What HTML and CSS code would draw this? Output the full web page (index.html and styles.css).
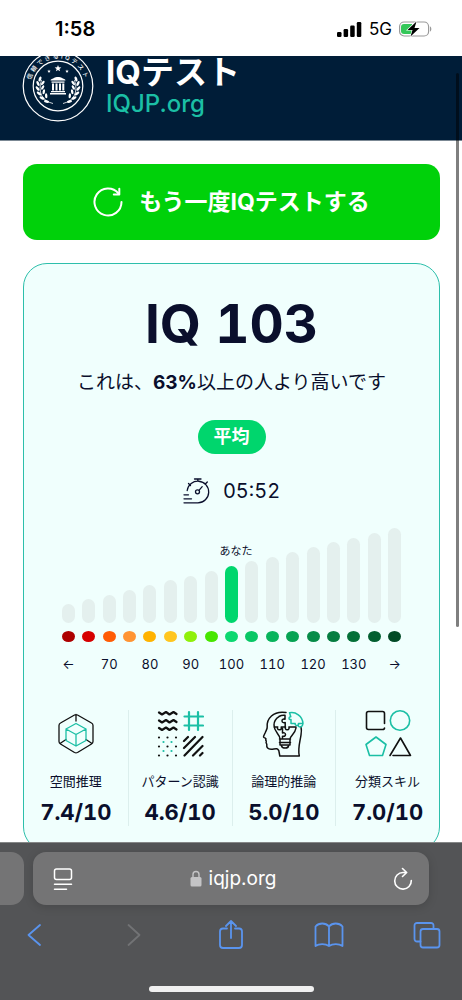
FILE: index.html
```html
<!DOCTYPE html>
<html lang="ja">
<head>
<meta charset="utf-8">
<meta name="viewport" content="width=device-width, initial-scale=1">
<title>IQテスト</title>
<link rel="stylesheet" href="styles.css">
</head>
<body>
<div class="screen">
  <div class="status">
    <span class="clock">1:58</span>
    <div class="status-right">
      <svg width="25" height="15" viewBox="0 0 25 15"><rect x="0" y="10" width="4.5" height="5" rx="1.2"/><rect x="6.6" y="7" width="4.5" height="8" rx="1.2"/><rect x="13.2" y="3.6" width="4.5" height="11.400" rx="1.200"/><rect x="19.800" y="0" width="4.500" height="15" rx="1.200"/></svg>
      <span class="network">5G</span>
      <svg width="33" height="18" viewBox="0 0 33 18"><rect x="0.600" y="2" width="29" height="14" rx="4.500" fill="none" stroke="#9a9a9a" stroke-width="1.200"/><path d="M31 6.500c1.800.6 1.800 4.400 0 5z" fill="#9a9a9a"/><path d="M5 4h8v10H5a3 3 0 0 1-3-3V7a3 3 0 0 1 3-3z" fill="#34c759"/><path d="M17.500 1.500 8.500 10h5l-2 6.500L20.500 8h-5z" fill="#000" stroke="#fff" stroke-width="1.200" paint-order="stroke"/></svg>
    </div>
  </div>

  <div class="viewport">
    <header class="site-header">
      <svg class="emblem" width="72" height="72" viewBox="0 0 72 72">
        <defs>
          <path id="ring" d="M8.500 36a27.500 27.500 0 0 1 55 0"/>
          <g id="branch" fill="#fff">
            <path d="M31 53.500C20 51 15.500 42 19.500 30" fill="none" stroke="#fff" stroke-width=".8"/>
            <ellipse cx="18" cy="29" rx="1.300" ry="2.600" transform="rotate(20 18 29)"/>
            <ellipse cx="16" cy="33.500" rx="1.300" ry="2.700" transform="rotate(-25 16 33.500)"/>
            <ellipse cx="20.800" cy="33" rx="1.200" ry="2.500" transform="rotate(40 20.800 33)"/>
            <ellipse cx="15.600" cy="38.500" rx="1.300" ry="2.700" transform="rotate(-38 15.600 38.500)"/>
            <ellipse cx="20.700" cy="37.500" rx="1.200" ry="2.500" transform="rotate(28 20.700 37.500)"/>
            <ellipse cx="17" cy="43.500" rx="1.300" ry="2.700" transform="rotate(-52 17 43.500)"/>
            <ellipse cx="21.800" cy="41.800" rx="1.200" ry="2.500" transform="rotate(12 21.800 41.800)"/>
            <ellipse cx="20" cy="48" rx="1.300" ry="2.700" transform="rotate(-65 20 48)"/>
            <ellipse cx="24.200" cy="45.800" rx="1.200" ry="2.500" transform="rotate(-5 24.200 45.800)"/>
            <ellipse cx="24.500" cy="51.500" rx="1.300" ry="2.600" transform="rotate(-78 24.500 51.500)"/>
          </g>
        </defs>
        <circle cx="36" cy="36" r="34.800" fill="none" stroke="#fff" stroke-width="1.200"/>
        <circle cx="36" cy="36" r="24.800" fill="none" stroke="#fff" stroke-width="1.200"/>
        <text class="emblem-text"><textPath href="#ring" startOffset="50%" text-anchor="middle">信頼できるIQテスト</textPath></text>
        <path d="m36 15 .9 2.300 2.500.1-2 1.500.7 2.400-2.100-1.400-2.100 1.400.7-2.400-2-1.500 2.500-.1z" fill="#fff"/>
        <path d="m27 19.500.5 1.200 1.300.1-1 .8.400 1.200-1.200-.7-1.100.7.3-1.200-1-.8 1.300-.1zM45 19.500l.5 1.200 1.300.1-1 .8.400 1.200-1.200-.7-1.100.7.3-1.200-1-.8 1.300-.1z" fill="#fff"/>
        <path d="M28.500 30.500c0-1.500 2.500-1.700 3.500-2.500 2-1.300 6-1.300 8 0 1 .8 3.500 1 3.500 2.500zM29.500 31.600h13v1.200h-13zM30 33.500h2v7h-2zM33.500 33.500h2v7h-2zM37 33.500h2v7h-2zM40.300 33.500h2v7h-2zM29 41h14v1.300H29zM28 43h16v1.600H28z" fill="#fff"/>
        <use href="#branch"/>
        <use href="#branch" transform="matrix(-1 0 0 1 72 0)"/>
      </svg>
      <div class="brand">
        <span class="brand-name">IQテスト</span>
        <span class="brand-domain">IQJP.org</span>
      </div>
    </header>

    <main class="content">
      <button class="retry" type="button">
        <svg width="30" height="30" viewBox="0 0 30 30" fill="none" stroke="#fff" stroke-width="2" stroke-linecap="round" stroke-linejoin="round"><path d="M28.500 15A13.500 13.500 0 1 1 25.500 6.500"/><path d="M26.300 1.800v5.700h-5.500"/></svg>
        <span>もう一度IQテストする</span>
      </button>

      <section class="card">
        <h1 class="score">IQ 103</h1>
        <p class="summary">これは、<strong>63%</strong>以上の人より高いです</p>
        <span class="badge">平均</span>
        <div class="time">
          <svg width="28" height="28" viewBox="0 0 28 28" fill="none" stroke="#0a0f2c" stroke-width="1.300" stroke-linecap="round"><path d="M4.200 13.500a10.800 10.800 0 1 1 10.800 12.300H1M11.500 2h6.500M14.800 2v2M5.500 6.500l2 2M24.300 5l-2 2M1 17.800h4.500M1 21.800h7.500M16.200 13.200l3-3.500"/><circle cx="14.500" cy="14.800" r="2"/></svg>
          <span>05:52</span>
        </div>

        <div class="chart">
          <div class="bars">
            <i style="height:20%"></i><i style="height:25%"></i><i style="height:30%"></i><i style="height:35%"></i><i style="height:40%"></i><i style="height:45%"></i><i style="height:50%"></i><i style="height:55%"></i><i class="you" style="height:60%"><span class="you-label">あなた</span></i><i style="height:65%"></i><i style="height:70%"></i><i style="height:75%"></i><i style="height:80%"></i><i style="height:85%"></i><i style="height:90%"></i><i style="height:95%"></i><i style="height:100%"></i>
          </div>
          <div class="dots">
            <i class="d1"></i><i class="d2"></i><i class="d3"></i><i class="d4"></i><i class="d5"></i><i class="d6"></i><i class="d7"></i><i class="d8"></i><i class="d9"></i><i class="d10"></i><i class="d11"></i><i class="d12"></i><i class="d13"></i><i class="d14"></i><i class="d15"></i><i class="d16"></i><i class="d17"></i>
          </div>
          <div class="axis">
            <span>←</span><span>70</span><span>80</span><span>90</span><span>100</span><span>110</span><span>120</span><span>130</span><span>→</span>
          </div>
        </div>

        <div class="skills">
          <div class="skill">
            <svg width="48" height="48" viewBox="0 0 48 48" fill="none" stroke-width="1.300" stroke-linejoin="round" stroke-linecap="round"><g stroke="#111"><path d="M22.500 5 8.500 13q-1.500.8-1.500 2.500v16q0 1.700 1.500 2.500L22.500 42.500q1.500.8 3 0L39.500 34q1.500-.8 1.500-2.500v-16q0-1.700-1.500-2.500L25.500 5q-1.500-.8-3 0zM24 4.500V11M8 33.500l6-4M40 33.500l-6-4"/></g><path stroke="#1bbfa5" d="m24 13.500 10 5.500v11.500L24 36l-10-5.500V19zM14 19l10 5.500L34 19M24 24.500V36"/></svg>
            <span class="skill-name">空間推理</span>
            <strong class="skill-score">7.4/10</strong>
          </div>
          <div class="skill">
            <svg width="48" height="48" viewBox="0 0 48 48" fill="none" stroke-width="2.200" stroke-linejoin="round" stroke-linecap="round"><g stroke="#111"><path d="m3 2.500 3 2 4-2.500 3.500 2.500 4-2.500 3 2M3 10.500l3 2 4-2.500 3.500 2.500 4-2.500 3 2M3 18l3 2 4-2.500 3.500 2.500 4-2.500 3 2M28 31l4-4M28 38l11-11M28.500 45.500 46.500 27M37 45.500l9.500-9.500M44 45.500l2.500-2.500"/></g><path stroke="#1bbfa5" d="M33 2v18M42 2v18M28.500 6.500H47M28.500 15.500H47"/><path stroke="#111" d="M3 27.500h0M11.500 27.500h0M20 27.500h0M3 36.500h0M11.500 36.500h0M20 36.500h0M3 45.500h0M11.500 45.500h0M20 45.500h0"/><path stroke="#1bbfa5" d="M7.500 32h0M15.500 32h0M7.500 41h0M15.500 41h0"/></svg>
            <span class="skill-name">パターン認識</span>
            <strong class="skill-score">4.6/10</strong>
          </div>
          <div class="skill">
            <svg width="48" height="48" viewBox="0 0 48 48" fill="none" stroke-width="1.500" stroke-linejoin="round" stroke-linecap="round"><g stroke="#111"><path d="M26 2.500C13 .5 6.500 9 7.200 17c.2 2-1.200 3.500-1.900 5.500l-1.600 3.500c-.5 1.200.2 1.800 1.500 2.100.8.300.9.800.5 1.800.2 1 .8 1 .5 2-.6 1 .7 1.500.6 2.600-.5 3 1 5 5 4.700 4-.5 5.500-1.500 7 1.500l1 5.300h19.500C37.500 39 40 32 41 25c.5-3 .8-5 0-8"/><path d="M20 29c0-5-6-6.500-6-14 0-4 2.500-6.700 5-8.300M36 18c-1 6-5.500 7.500-6 11M19.500 29h11M19.500 32.500h11M20 29v6h10v-6M21.500 36c1 2.800 6.500 2.800 7 0M19 6.500c2-1.200 4-1.500 6-1.200v4c-1-.4-3.200-.3-3 1.700s2.500 1.800 3.200 1.500V17h-4c.4 1 .2 3-1.800 2.800-2.100 0-2.200-1.900-1.700-2.800H14M25.500 17c-.4 1-.3 2.800 1.700 2.800s2.100-1.800 1.700-2.800H36M22.500 18.500V23c1-.5 3-.3 3 1.600 0 1.700-1.700 2-3 1.600v2.600"/></g><path stroke="#1bbfa5" d="M29.500 2.800c6-1.300 13 3 13.500 10.700h-4.500c1 2.500-4 3-3.300-.1H31V9.500c-2.400.8-2.700-3-.2-2.800zM43 13.500c-.4 2.700-2 3.800-3.500 3.400-1.400-.4-1.500-2-1-3.400"/></svg>
            <span class="skill-name">論理的推論</span>
            <strong class="skill-score">5.0/10</strong>
          </div>
          <div class="skill">
            <svg width="48" height="48" viewBox="0 0 48 48" fill="none" stroke-width="1.600" stroke-linejoin="round" stroke-linecap="round"><g stroke="#111"><path d="M20.500 13.500V3.500q0-2-2-2h-14q-2 0-2 2v14q0 2 2 2h14q2 0 2-1.500M29 45.500h17.500L36.500 28 26 45.500"/></g><g stroke="#1bbfa5"><circle cx="36" cy="10.500" r="9.700"/><path d="M12 27 22 34.500 18.500 45.500h-13L2 34.500z"/></g></svg>
            <span class="skill-name">分類スキル</span>
            <strong class="skill-score">7.0/10</strong>
          </div>
        </div>
      </section>
    </main>
    <div class="scrollbar"></div>
  </div>

  <footer class="browser">
    <div class="tabs">
      <div class="tab-edge"></div>
      <div class="address">
        <button class="icon-button" type="button" aria-label="ページメニュー"><svg width="20" height="24" viewBox="0 0 20 24" fill="none" stroke="#fff" stroke-width="1.500" stroke-linecap="round"><rect x="1.500" y="2" width="17" height="10.500" rx="2"/><path d="M1.500 17.200h17M1.500 22.300h12"/></svg></button>
        <span class="url"><svg width="12" height="17" viewBox="0 0 12 17"><rect x="0.500" y="7" width="11" height="9.500" rx="1.500" fill="#c4c4c6"/><path d="M3 7V4.500a3 3 0 0 1 6 0V7" fill="none" stroke="#c4c4c6" stroke-width="1.400"/></svg>iqjp.org</span>
        <button class="icon-button" type="button" aria-label="再読み込み"><svg width="20" height="24" viewBox="0 0 20 24" fill="none" stroke="#fff" stroke-width="1.600" stroke-linecap="round" stroke-linejoin="round"><path d="M18.300 13.500A8.300 8.300 0 1 1 10 5.500h3.500M9.500 1.500l4.200 4-4.200 4"/></svg></button>
      </div>
      <div class="tab-gap"></div>
    </div>
    <nav class="toolbar">
      <button class="tool" type="button" aria-label="戻る"><svg width="30" height="30" viewBox="0 0 30 30"><path d="M20 5 8.500 15 20 25"/></svg></button>
      <button class="tool tool-off" type="button" aria-label="進む"><svg width="30" height="30" viewBox="0 0 30 30"><path d="m10.500 5 11 10-11 10"/></svg></button>
      <button class="tool" type="button" aria-label="共有"><svg width="30" height="30" viewBox="0 0 30 30"><path d="M11 8.500H7a3 3 0 0 0-3 3V25a3 3 0 0 0 3 3h16a3 3 0 0 0 3-3V11.500a3 3 0 0 0-3-3h-4M15 18V1.500M10 6l5-5 5 5"/></svg></button>
      <button class="tool" type="button" aria-label="ブックマーク"><svg width="30" height="30" viewBox="0 0 30 30"><path d="M15 6.500C11.500 2.500 5 2.500 1.500 6.500V26c3.500-2.500 10-2.500 13.500 0 3.500-2.500 10-2.500 13.500 0V6.500C25 2.500 18.500 2.500 15 6.500zV26"/></svg></button>
      <button class="tool" type="button" aria-label="タブ"><svg width="30" height="30" viewBox="0 0 30 30"><rect x="8.500" y="9" width="19" height="18.500" rx="2.500"/><path d="M8.500 21.500H5a2.500 2.500 0 0 1-2.500-2.500V5.500A2.500 2.500 0 0 1 5 3h14a2.500 2.500 0 0 1 2.500 2.500V9"/></svg></button>
    </nav>
    <div class="home-indicator"></div>
  </footer>
</div>
</body>
</html>
```
FILE: styles.css
```css
* {
  box-sizing: border-box;
}

body {
  margin: 0;
  background: #fff;
  color: #0a0f2c;
  font-family: Inter, "Noto Sans CJK JP", sans-serif;
}

button {
  border: 0;
  padding: 0;
  background: none;
  color: inherit;
  font: inherit;
}

svg {
  display: block;
  flex-shrink: 0;
}

.screen {
  display: flex;
  flex-direction: column;
  height: 100vh;
  overflow: hidden;
}

/* Status bar */
.status {
  display: flex;
  justify-content: space-between;
  align-items: center;
  flex-shrink: 0;
  padding: 16px 30px 14px 55px;
  color: #000;
}

.clock {
  font-size: 20px;
  line-height: 26px;
  font-weight: 600;
}

.status-right {
  display: flex;
  align-items: center;
  gap: 7px;
}

.network {
  font-size: 17px;
  line-height: 20px;
}

/* Page */
.viewport {
  position: relative;
  flex: 1;
  min-height: 0;
  overflow: hidden;
}

.site-header {
  display: flex;
  align-items: center;
  gap: 12px;
  height: 110px;
  margin-top: -25px;
  padding: 1px 22px 0;
  background: #001d38;
  border-bottom: 1px solid #7b8894;
}

.emblem-text {
  fill: #fff;
  font-size: 6px;
  font-weight: 500;
  letter-spacing: 2px;
}

.brand {
  display: flex;
  flex-direction: column;
}

.brand-name {
  color: #fff;
  font-size: 33px;
  line-height: 36px;
  font-weight: 700;
}

.brand-domain {
  color: #1bbfa5;
  font-size: 24px;
  line-height: 28px;
  font-weight: 500;
}

.content {
  padding: 23px 22px 0 23px;
}

.retry {
  display: flex;
  justify-content: center;
  align-items: center;
  gap: 16px;
  width: 100%;
  height: 76px;
  border-radius: 14px;
  background: #00d10a;
  color: #fff;
  font-size: 23px;
  line-height: 32px;
  font-weight: 700;
}

.card {
  display: flex;
  flex-direction: column;
  align-items: center;
  margin-top: 23px;
  padding: 32px 0 24px;
  border: 1px solid #2dbfab;
  border-radius: 24px;
  background: #f0fffd;
}

.score {
  margin: 0;
  font-size: 53px;
  line-height: 56px;
  font-weight: 700;
  font-variant-numeric: tabular-nums;
}

.summary {
  margin: 17px 0 0;
  font-size: 19px;
  line-height: 28px;
}

.badge {
  margin-top: 23px;
  padding: 0 16px;
  border-radius: 17px;
  background: #00d66d;
  color: #fff;
  font-size: 18px;
  line-height: 34px;
  font-weight: 700;
}

.time {
  display: flex;
  align-items: center;
  gap: 12px;
  margin-top: 23px;
  font-size: 20px;
  line-height: 28px;
  font-variant-numeric: tabular-nums;
}

/* Distribution chart */
.chart {
  align-self: stretch;
  margin-top: 23px;
  padding: 0 34px;
}

.bars,
.dots {
  display: grid;
  grid-template-columns: repeat(17, 1fr);
  justify-items: center;
}

.bars {
  align-items: end;
  height: 95px;
}

.bars i {
  position: relative;
  width: 13px;
  border-radius: 7px;
  background: #e4f0ee;
  font-style: normal;
}

.bars .you {
  background: #00d66d;
}

.you-label {
  position: absolute;
  bottom: 100%;
  left: 50%;
  margin-bottom: 7px;
  transform: translateX(-36%);
  font-size: 11px;
  line-height: 16px;
  white-space: nowrap;
}

.dots {
  margin-top: 8px;
}

.dots i {
  width: 13px;
  height: 11px;
  border-radius: 50%;
}

.d1 { background: #ad0000; }
.d2 { background: #d60000; }
.d3 { background: #ff5c05; }
.d4 { background: #ff9433; }
.d5 { background: #ffb300; }
.d6 { background: #ffc61f; }
.d7 { background: #8ff00a; }
.d8 { background: #47e600; }
.d9 { background: #0bd870; }
.d10 { background: #08c765; }
.d11 { background: #08b45c; }
.d12 { background: #06a353; }
.d13 { background: #068c48; }
.d14 { background: #057d40; }
.d15 { background: #047038; }
.d16 { background: #035f30; }
.d17 { background: #024a26; }

.axis {
  display: grid;
  grid-template-columns: repeat(9, 1fr);
  margin: 12px -10px 0;
  font-size: 13px;
  line-height: 20px;
  text-align: center;
  font-variant-numeric: tabular-nums;
}

/* Skills */
.skills {
  display: grid;
  grid-template-columns: repeat(4, 1fr);
  align-self: stretch;
  margin-top: 36px;
}

.skill {
  display: flex;
  flex-direction: column;
  align-items: center;
}

.skill + .skill {
  border-left: 1px solid #dcefed;
}

.skill-name {
  margin-top: 13px;
  font-size: 13px;
  line-height: 20px;
  white-space: nowrap;
}

.skill-score {
  margin-top: 7px;
  font-size: 22px;
  line-height: 28px;
  font-variant-numeric: tabular-nums;
}

.scrollbar {
  position: absolute;
  top: 17px;
  right: 3px;
  width: 3px;
  height: 554px;
  border-radius: 2px;
  background: rgba(0, 0, 0, 0.5);
}

/* Browser controls */
.browser {
  flex-shrink: 0;
  padding: 9px 0 8px;
  border-top: 1px solid #858787;
  background: #535456;
  color: #fff;
}

.tabs {
  display: flex;
  gap: 9px;
}

.tab-edge {
  width: 24px;
  border-radius: 0 13px 13px 0;
  background: #747475;
}

.tab-gap {
  width: 24px;
}

.address {
  display: flex;
  flex: 1;
  justify-content: space-between;
  align-items: center;
  height: 53px;
  padding: 0 16px 0 20px;
  border-radius: 13px;
  background: #747475;
  box-shadow: 0 2px 10px rgba(0, 0, 0, 0.15);
}

.url {
  display: flex;
  align-items: center;
  gap: 7px;
  font-size: 19px;
  line-height: 24px;
}

.toolbar {
  display: flex;
  justify-content: space-between;
  margin-top: 15px;
  padding: 0 20px;
}

.tool {
  color: #5a94ee;
}

.tool svg {
  fill: none;
  stroke: currentColor;
  stroke-width: 1.8;
  stroke-linecap: round;
  stroke-linejoin: round;
}

.tool-off {
  color: #727375;
}

.home-indicator {
  width: 165px;
  height: 6px;
  margin: 36px auto 0;
  border-radius: 3px;
  background: #f0f0f0;
}
```
